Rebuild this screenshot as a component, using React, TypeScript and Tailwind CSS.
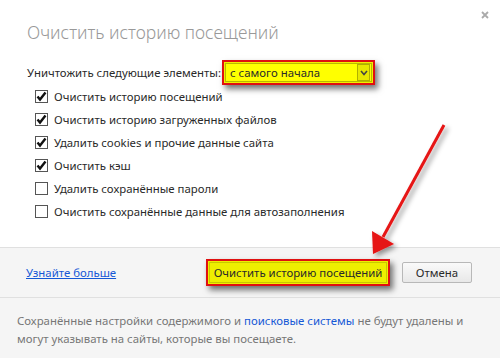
import React from 'react'

const items = [
  { label: 'Очистить историю посещений', checked: true },
  { label: 'Очистить историю загруженных файлов', checked: true },
  { label: 'Удалить cookies и прочие данные сайта', checked: true },
  { label: 'Очистить кэш', checked: true },
  { label: 'Удалить сохранённые пароли', checked: false },
  { label: 'Очистить сохранённые данные для автозаполнения', checked: false },
]

const Checkbox = ({ checked }: { checked: boolean }) => (
  <span className="w-[13px] h-[13px] border border-[#555] bg-white flex items-center justify-center shrink-0">
    {checked && (
      <svg width="11" height="11" viewBox="0 0 11 11">
        <path d="M1.5 5.5 L4 8.5 L9.5 1.5" fill="none" stroke="#111" strokeWidth="2.4" />
      </svg>
    )}
  </span>
)

export default function App() {
  return (
    <div
      className="w-[500px] h-[358px] relative bg-white overflow-hidden text-[#2a2a2a] flex flex-col text-[11.4px]"
      style={{ fontFamily: '"Noto Sans", "Open Sans", sans-serif' }}
    >
      <button className="absolute top-[11px] left-[481px]">
        <svg width="8" height="8" viewBox="0 0 8 8">
          <path d="M1 1 L7 7 M7 1 L1 7" stroke="#aaa" strokeWidth="1.8" />
        </svg>
      </button>

      <div className="px-[27px] pt-[20px]">
        <h1 className="text-[17.5px] font-light text-[#999] leading-[24px]">Очистить историю посещений</h1>

        <div className="mt-[16px] flex items-center">
          <span>Уничтожить следующие элементы:</span>
          <div className="ml-[1px] w-[153px] h-[25px] border-2 border-[#e01010] p-[1px] bg-[#f0f000] shadow-[3px_4px_6px_rgba(0,0,0,0.55)]">
            <div className="h-full border border-[#b8b800] bg-[#ffff00] flex items-center justify-between pl-[4px]">
              <span>с самого начала</span>
              <span className="w-[13px] h-[17px] mr-[1px] border border-[#b0b000] bg-[#e8e800] flex items-center justify-center">
                <svg width="8" height="6" viewBox="0 0 8 6">
                  <path d="M1 1 L4 4.5 L7 1" fill="none" stroke="#444" strokeWidth="1.6" />
                </svg>
              </span>
            </div>
          </div>
        </div>

        <div className="flex flex-col pl-[8px]">
          {items.map((it) => (
            <label key={it.label} className="h-[23px] flex items-center gap-[6px]">
              <Checkbox checked={it.checked} />
              <span>{it.label}</span>
            </label>
          ))}
        </div>
      </div>

      <div className="mt-auto bg-[#f5f5f5]">
        <div className="h-[51px] border-t border-b border-[#e0e0e0] flex items-center pl-[26px] pr-[28px]">
          <a href="#" className="text-[#1558d6] underline">Узнайте больше</a>
          <div className="ml-auto flex items-center gap-[12px]">
            <button className="h-[27px] w-[184px] border-2 border-[#e01010] bg-[#eeee00] p-[1px] shadow-[3px_4px_6px_rgba(0,0,0,0.55)]">
              <span className="h-full border border-[#c8c800] flex items-center justify-center">Очистить историю посещений</span>
            </button>
            <button className="h-[21px] w-[70px] border border-[#b8b8b8] rounded-[2px] bg-gradient-to-b from-[#fafafa] to-[#e8e8e8]">
              Отмена
            </button>
          </div>
        </div>
        <div className="px-[17px] pt-[14px] text-[#777] leading-[18px] h-[60px]">
          <p>
            Сохранённые настройки содержимого и <a href="#" className="text-[#1558d6]">поисковые системы</a> не будут удалены и
          </p>
          <p>могут указывать на сайты, которые вы посещаете.</p>
        </div>
      </div>

      <svg className="absolute left-0 top-0 pointer-events-none" width="500" height="358">
        <defs>
          <filter id="sh" x="-20%" y="-20%" width="140%" height="140%">
            <feDropShadow dx="3" dy="3" stdDeviation="2.5" floodColor="#000" floodOpacity="0.4" />
          </filter>
        </defs>
        <g filter="url(#sh)">
          <line x1="444" y1="125" x2="383" y2="237" stroke="#e61414" strokeWidth="3" />
          <polygon points="372,231 394,244 373,254" fill="#e61414" />
        </g>
      </svg>
    </div>
  )
}
